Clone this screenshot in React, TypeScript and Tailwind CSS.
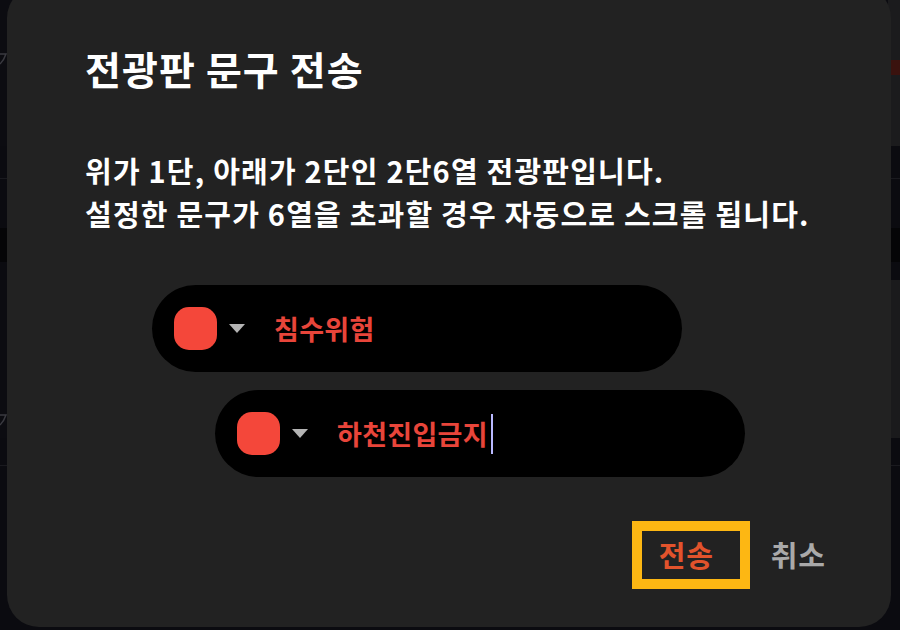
import React from "react";

// one line of the sign: colour swatch + dropdown caret + text
function SignRow({ text, active, indent }: { text: string; active?: boolean; indent: string }) {
  return (
    <div className={`${indent} flex h-[87px] w-[530px] items-center rounded-full bg-black pl-[22px]`}>
      <span className="h-[43px] w-[43px] rounded-[15px] bg-[#f4473a]" />
      <svg className="ml-[12px]" width="16" height="9" viewBox="0 0 16 9">
        <path d="M0 0 H16 L8 9 Z" fill="#b4b4b4" />
      </svg>
      <span className="ml-[29px] flex items-center text-[27px] font-semibold leading-none tracking-[0.3px] text-[#e8453a]">
        {text}
        {active && <span className="ml-[3px] h-[40px] w-[2px] bg-[#b9b9ff]" />}
      </span>
    </div>
  );
}

export default function App() {
  return (
    <div
      className="relative h-[630px] w-[900px] overflow-hidden bg-[#0b0b10]"
      style={{ fontFamily: '"Noto Sans CJK KR", "Noto Sans", sans-serif' }}
    >
      {/* dimmed page behind the modal */}
      <div className="flex h-full flex-col">
        <div className="h-[146px] bg-[#0c0c11]" />
        <div className="h-[33px] border-b border-[#1a1a1f] bg-[#0b0b10]" />
        <div className="h-[49px] bg-[#0b0b10]" />
        <div className="h-[34px] bg-[#050507]" />
        <div className="h-[18px] bg-[#0b0b10]" />
        <div className="h-[158px] bg-[#0c0c11]" />
        <div className="h-[28px] border-b border-[#1a1a1f] bg-[#0b0b10]" />
        <div className="flex-1 bg-[#0b0b10]" />
      </div>
      <div className="absolute right-0 top-0 flex h-[146px] w-[12px] flex-col bg-[#1b1b1d]">
        <div className="mt-[60px] h-[15px] bg-[#3a120e]" />
      </div>
      <div className="absolute right-0 top-[280px] h-[158px] w-[12px] bg-[#1a1a1c]" />
      <svg className="absolute left-0 top-[52px]" width="8" height="14" viewBox="0 0 8 14">
        <path d="M0 2 H6 Q4 8 0 12" fill="none" stroke="#3a3a40" strokeWidth="1.5" />
      </svg>
      <svg className="absolute left-0 top-[413px]" width="8" height="14" viewBox="0 0 8 14">
        <path d="M0 2 H6 Q4 8 0 12" fill="none" stroke="#3a3a40" strokeWidth="1.5" />
      </svg>

      {/* modal */}
      <div className="absolute left-[7px] top-[-14px] flex h-[641px] w-[884px] flex-col rounded-[32px] bg-[#222222] pl-[78px] pt-[61px]">
        <h2 className="text-[39px] font-bold leading-[43px] tracking-[1.1px] text-white">전광판 문구 전송</h2>
        <p className="mt-[59px] text-[29px] font-semibold leading-[43px] tracking-[1.2px] text-white">
          위가 1단, 아래가 2단인 2단6열 전광판입니다.
          <br />
          설정한 문구가 6열을 초과할 경우 자동으로 스크롤 됩니다.
        </p>

        <div className="mt-[50px] flex flex-col gap-[18px]">
          <SignRow text="침수위험" indent="ml-[67px]" />
          <SignRow text="하천진입금지" indent="ml-[130px]" active />
        </div>

        <div className="mt-[44px] flex items-center justify-end pr-[65px]">
          <button className="flex h-[68px] w-[118px] items-center border-[10px] border-[#fdb713] pl-[17px] text-[29px] font-bold tracking-[1px] text-[#e2532c]">
            전송
          </button>
          <button className="ml-[21px] text-[29px] font-bold tracking-[1px] text-[#a9a9a9]">취소</button>
        </div>
      </div>
    </div>
  );
}
